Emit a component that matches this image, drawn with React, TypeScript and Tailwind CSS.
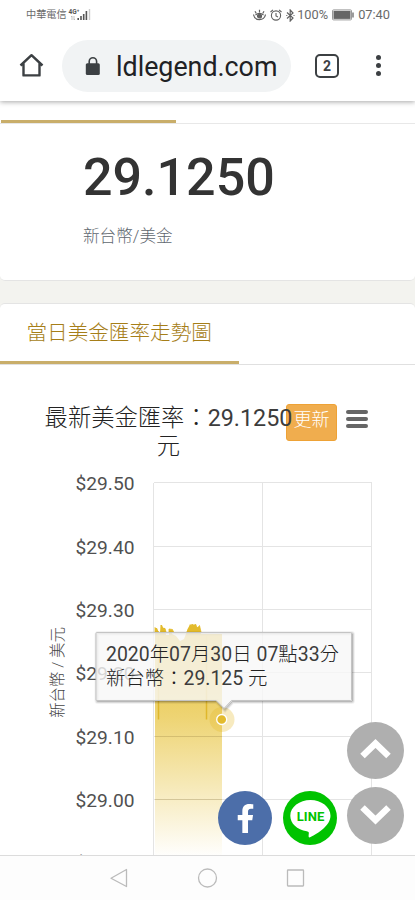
import { FaFacebookF } from "react-icons/fa";

const ticks = [
  { y: 483, label: "$29.50" },
  { y: 547, label: "$29.40" },
  { y: 610, label: "$29.30" },
  { y: 673, label: "$29.20" },
  { y: 737, label: "$29.10" },
  { y: 800, label: "$29.00" },
  { y: 863, label: "$28.90" },
];

const tooltipPath =
  "M97 632.500H350.500Q351.500 632.500 351.500 633.500V699.500Q351.500 700.500 350.500 700.500H231.500L224 708.500L216 700.500H97Q96 700.500 96 699.500V633.500Q96 632.500 97 632.500Z";

function StatusBar() {
  return (
    <div className="relative z-20 h-[30px] shrink-0 flex items-center justify-between bg-white pl-[26px] pr-[25px] text-[#6a6a6a]">
      <div className="flex items-center">
        <span className="text-[10.2px] leading-4">中華電信</span>
        <svg width="23" height="16" viewBox="0 0 23 16" className="ml-px">
          <text x="0.5" y="6.500" fontSize="6.500" fontWeight="700" fill="#555">
            4G⁺
          </text>
          <path d="M4 9v4M3 10l1-1M6 9v4M7 12l-1 1" stroke="#aaa" strokeWidth=".7" fill="none" />
          <path d="M10.200 11v2M13 9v4M15.700 7v6M18.400 4v9" stroke="#555" strokeWidth="1.600" />
          <path d="M21.500 2v11" stroke="#ccc" strokeWidth="1.400" />
        </svg>
      </div>
      <div className="flex items-center">
        <svg width="13" height="12" viewBox="0 0 13 12" fill="none" stroke="#606060" strokeWidth="1.200">
          <path d="M.5 5.500Q1.500 10.500 6.500 10.700Q11.500 10.500 12.500 5.500M2.500 6Q6.500 2.800 10.500 6" />
          <circle cx="6.500" cy="7" r="2" fill="#606060" />
          <path d="M6.500 3.500V.8M3.300 4.500L2 2.300M9.700 4.500L11 2.300" />
        </svg>
        <svg width="12" height="12" viewBox="0 0 12 12" fill="none" stroke="#606060" strokeWidth="1.100" className="ml-1">
          <circle cx="6" cy="6.500" r="4.600" />
          <path d="M6 4v3l2 1M.5 3L3 .8M11.500 3L9 .8" />
        </svg>
        <svg width="9" height="13" viewBox="0 0 9 13" fill="none" stroke="#606060" strokeWidth="1.200" className="ml-1">
          <path d="M1 3.500l6 5.500-2.800 3V1L7 4 1 9.500" />
          <path d="M.3 6.500h1M7.500 6.500h1" />
        </svg>
        <span className="ml-[2px] text-[12.800px] leading-4">100%</span>
        <svg width="22" height="12" viewBox="0 0 22 12" className="ml-1">
          <rect x=".5" y=".9" width="19" height="10" rx="1" fill="#fff" stroke="#999" />
          <rect x="1.500" y="1.900" width="17" height="8" fill="#666" />
          <path d="M21 3.500v5" stroke="#666" strokeWidth="1.300" />
        </svg>
        <span className="ml-[4px] text-[12.800px] leading-4">07:40</span>
      </div>
    </div>
  );
}

function AddressBar() {
  return (
    <div className="relative z-10 h-[71px] shrink-0 flex items-center bg-white pl-[19px] shadow-[0_1px_5px_rgba(0,0,0,0.35)]">
      <svg width="25" height="25" viewBox="0 0 25 25" fill="none" stroke="#3c4043" strokeWidth="2.400">
        <path d="M1.500 12.500L12.500 2.200l11 10.300M4.500 10v12.400h16V10" strokeLinejoin="round" />
      </svg>
      <div className="ml-[18px] h-[52px] w-[229px] rounded-full bg-[#f1f3f4] flex items-center">
        <svg width="16" height="20" viewBox="0 0 16 20" className="ml-[23px]">
          <path d="M4.200 8V5.500a3.700 3.700 0 0 1 7.400 0V8" fill="none" stroke="#3c4043" strokeWidth="1.600" />
          <rect x=".8" y="7.200" width="14" height="11.800" rx="1.500" fill="#3c4043" />
        </svg>
        <span className="ml-[15px] mt-[2px] text-[26.800px] leading-8 text-[#202124]">ldlegend.com</span>
      </div>
      <div className="ml-[24px] size-[24px] rounded-[5px] border-[2.500px] border-[#3c4043] flex items-center justify-center text-[14px] leading-4 font-bold text-[#3c4043]">
        2
      </div>
      <div className="ml-[36.500px] flex flex-col gap-[2.500px]">
        <span className="size-[5.500px] rounded-full bg-[#3c4043]" />
        <span className="size-[5.500px] rounded-full bg-[#3c4043]" />
        <span className="size-[5.500px] rounded-full bg-[#3c4043]" />
      </div>
    </div>
  );
}

function RateChart() {
  return (
    <svg width="415" height="385" viewBox="0 470 415 385" className="block">
      <defs>
        <linearGradient id="area" gradientUnits="userSpaceOnUse" x1="0" y1="624" x2="0" y2="858">
          <stop offset="0" stopColor="#e3bb2c" />
          <stop offset="0.400" stopColor="#e6c032" stopOpacity="0.680" />
          <stop offset="1" stopColor="#e6c032" stopOpacity="0" />
        </linearGradient>
      </defs>
      {ticks.map((t) => (
        <g key={t.y}>
          <path d={`M154 ${t.y - 0.5}H372`} stroke="#e4e4e4" />
          <text x="134.500" y={t.y + 6.500} textAnchor="end" fontSize="19.200" fontWeight="400" fill="#505050">
            {t.label}
          </text>
        </g>
      ))}
      <path d="M153.500 483V855M262.500 483V855M371.500 483V855" stroke="#e4e4e4" />
      <path
        d="M155 855V628h2l2 5h2v-8h1l1 3h2l1 7 3 0 0-5h2l1 4 4 2 4 5 4-2 3-8 3-7 2 2 2-2 3 4 2-2 2 8 1 0H222V855Z"
        fill="url(#area)"
      />
      <path
        d="M155 632V627.500l2.500 3 1 1.500ZM160.500 632l.5-7 1.500 3 2.500.5 1 3.500ZM169 632v-3l3.500.5 1 2.500ZM187 632l1.500-4 2-1 1.500-3 2 2 1.500-2 1.500 3.500 1.500 0 1-2 1.500 6.500Z"
        fill="#e3bb2c"
        stroke="#e3bb2c"
        strokeWidth=".8"
      />
      <path d="M158.500 636V719.500M206.500 636V719.500" stroke="#dfb72c" strokeWidth="1.500" fill="none" />
      <path d="M155 736.500h67M155 799.500h67" stroke="#a48c50" strokeOpacity=".25" />
      <circle cx="222" cy="719.500" r="12.500" fill="#e3bb2c" fillOpacity=".3" />
      <circle cx="221.700" cy="719.500" r="5" fill="#e3bb2c" stroke="#fff" strokeWidth="1.300" />
      <g fill="none" stroke="#000" transform="translate(1 1)">
        <path d={tooltipPath} strokeWidth="5" strokeOpacity=".05" />
        <path d={tooltipPath} strokeWidth="3" strokeOpacity=".1" />
        <path d={tooltipPath} strokeWidth="1" strokeOpacity=".15" />
      </g>
      <path d={tooltipPath} fill="#f8f8f8" fillOpacity=".8" stroke="#c4c4c4" />
      <text x="106" y="661" fontSize="19.400" fill="#3c3c3c" textLength="233" lengthAdjust="spacingAndGlyphs">
        2020<tspan fontWeight="300" fill="#222">年</tspan>07<tspan fontWeight="300" fill="#222">月</tspan>30
        <tspan fontWeight="300" fill="#222">日</tspan> 07
        <tspan fontWeight="300" fill="#222">點</tspan>33<tspan fontWeight="300" fill="#222">分</tspan>
      </text>
      <text x="106" y="685" fontSize="19.400" fill="#3c3c3c">
        <tspan fontWeight="300" fill="#222">新台幣：</tspan>29.125 <tspan fontWeight="300" fill="#222">元</tspan>
      </text>
      <text transform="translate(62.500 672.500) rotate(-90)" textAnchor="middle" fontSize="15.400" fill="#444" className="font-light">
        新台幣 / 美元
      </text>
    </svg>
  );
}

function App() {
  return (
    <div className="relative w-[415px] h-[900px] overflow-hidden flex flex-col bg-white font-['Roboto','Noto_Sans_CJK_TC',sans-serif]">
      <StatusBar />
      <AddressBar />
      <div className="h-[754px] shrink-0 overflow-hidden bg-[#f3f3ef]">
        <div className="h-[180px] rounded-b-[5px] border-b border-[#e4e4e4] bg-white flex flex-col">
          <div className="h-[23px] shrink-0 border-b border-[#e8e8e8] flex items-end">
            <div className="ml-px w-[175px] h-[3px] bg-[#c9ae6a]" />
          </div>
          <div className="pl-[83px] pt-[22px]">
            <div className="text-[52px] leading-[64px] font-medium text-[#333]">29.1250</div>
            <div className="mt-[15px] text-[16.600px] leading-6 font-light text-[#5f6870]">新台幣/美金</div>
          </div>
        </div>
        <div className="mt-[22px] rounded-t-[5px] border-t border-[#e4e4e4] bg-white">
          <div className="h-[61px] border-b border-[#e0e0e0] flex flex-col justify-between">
            <h2 className="pl-[26.500px] pt-[14px] text-[20.600px] leading-[30px] font-light text-[#a67e18]">
              當日美金匯率走勢圖
            </h2>
            <div className="w-[239px] h-[3px] bg-[#c9ae6a]" />
          </div>
          <div className="h-[105px] pt-[39px] flex items-start">
            <h3 className="relative z-10 ml-[44px] w-[249px] text-center text-[23.300px] leading-[28px] font-light text-[#222] whitespace-nowrap">
              最新美金匯率：<span className="font-normal text-[#3c3c3c]">29.1250</span>
              <br />元
            </h3>
            <button className="-ml-[7px] w-[51px] h-[37px] rounded-[3px] border border-[#eea236] bg-[#f0ad4e] pb-[5px] text-[18px] leading-[28px] font-light text-white">
              更新
            </button>
            <div className="ml-[9px] mt-[6px] w-[22px] flex flex-col gap-[3px]">
              <span className="h-[4px] rounded-full bg-[#666]" />
              <span className="h-[4px] rounded-full bg-[#666]" />
              <span className="h-[4px] rounded-full bg-[#666]" />
            </div>
          </div>
          <RateChart />
        </div>
      </div>
      <div className="h-[45px] shrink-0 border-t border-[#dcdcdc] bg-[#fdfdfd] flex items-center pl-[109px]">
        <svg width="198" height="22" viewBox="0 0 198 22" fill="none" stroke="#bbb" strokeWidth="1.300" strokeLinejoin="round">
          <path d="M17.500 2.500V19.500L2 11.200Z" />
          <circle cx="98.500" cy="11" r="9" />
          <rect x="178.500" y="3" width="16" height="16" rx=".5" />
        </svg>
      </div>
      {/* floating buttons */}
      <div className="absolute left-[218px] top-[791px] flex gap-[11px]">
        <a href="#" className="size-[54px] rounded-full bg-[#4c6ea9] flex items-center justify-center">
          <FaFacebookF className="text-white" size={29} />
        </a>
        <a href="#" className="size-[54px] rounded-full bg-[#00c300]">
          <svg width="54" height="54" viewBox="0 0 54 54">
            <path
              d="M27.500 9C16.500 9 7.300 15.900 7.300 24.800c0 7.700 6.700 14 16.500 15.400 2.300.4 2.200 1.300 1.900 3.300-.3 2.500 0 3.600 1.900 2.600C35 42.500 47.500 34.500 47.500 24.800 47.500 15.900 38.300 9 27.500 9Z"
              fill="#fff"
            />
            <text x="27.500" y="29.500" textAnchor="middle" fontSize="13" fontWeight="700" fill="#00c300" textLength="27.500" lengthAdjust="spacingAndGlyphs">
              LINE
            </text>
          </svg>
        </a>
      </div>
      <div className="absolute left-[347px] top-[722px] flex flex-col gap-[8px]">
        <a href="#" className="size-[57px] rounded-full bg-[#afafaf]">
          <svg width="57" height="57" viewBox="0 0 57 57" fill="none" stroke="#fff" strokeWidth="6.500">
            <path d="M15.500 34L28.500 21.500l13 12.500" />
          </svg>
        </a>
        <a href="#" className="size-[57px] rounded-full bg-[#afafaf]">
          <svg width="57" height="57" viewBox="0 0 57 57" fill="none" stroke="#fff" strokeWidth="6.500">
            <path d="M15.500 20.500L28.500 33l13-12.500" />
          </svg>
        </a>
      </div>
    </div>
  );
}

export default App;
